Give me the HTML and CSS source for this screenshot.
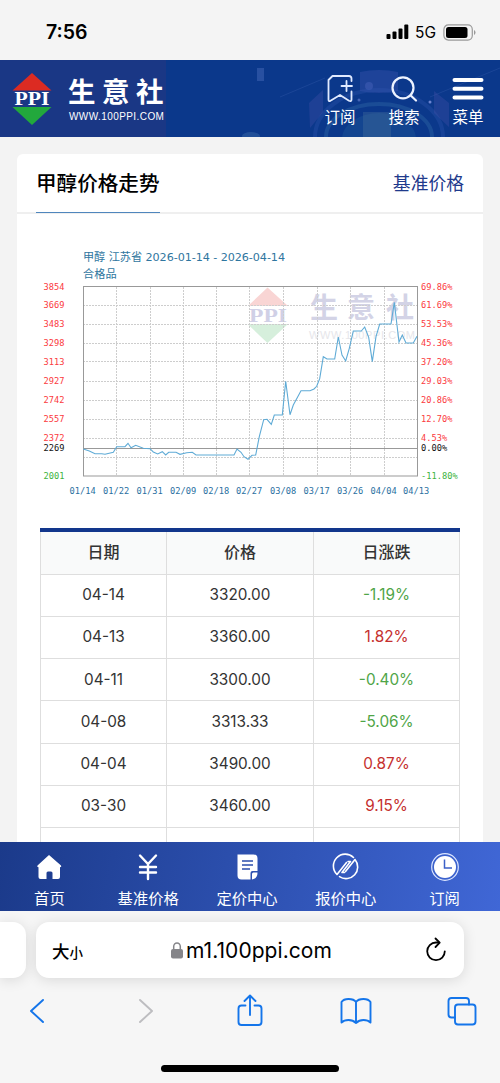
FILE: index.html
```html
<!DOCTYPE html>
<html lang="zh-CN">
<head>
    <meta charset="UTF-8">
    <meta name="viewport" content="width=device-width, initial-scale=1.0">
    <title>甲醇价格走势 - 生意社</title>
    <link rel="stylesheet" href="styles.css">
</head>
<body>
    <div class="status">
        <span class="time">7:56</span>
        <div class="signal">
            <svg width="23" height="16" viewBox="0 0 23 16">
                <rect x="0.5" y="10" width="4" height="5" rx="1"/>
                <rect x="6.5" y="7.5" width="4" height="7.5" rx="1"/>
                <rect x="12.5" y="4.5" width="4" height="10.5" rx="1"/>
                <rect x="18.3" y="0.5" width="4" height="14.5" rx="1"/>
            </svg>
            <span class="net">5G</span>
            <svg width="33" height="17" viewBox="0 0 33 17">
                <rect x="0.9" y="0.9" width="28.4" height="15.2" rx="4.5" fill="none" stroke="#999" stroke-width="1.2"/>
                <rect x="3" y="3" width="21.5" height="11" rx="2.5"/>
                <path d="M31 6v5q1.5-.6 1.500-2.500T31 6z" fill="#999"/>
            </svg>
        </div>
    </div>

    <header class="header">
        <div class="brand">
            <svg class="logo" width="40" height="54" viewBox="0 0 40 54">
                <path d="M20 1L39.500 18.500H0.500z" fill="#dc2b22"/>
                <path d="M0.500 35H39.500L20 53z" fill="#22a83c"/>
                <text x="2.500" y="32.500" textLength="35" lengthAdjust="spacingAndGlyphs">PPI</text>
            </svg>
            <div class="brand-text">
                <div class="brand-name">生意社</div>
                <div class="brand-url">WWW.100PPI.COM</div>
            </div>
        </div>
        <svg class="header-art" width="334" height="77" viewBox="166 60 334 77">
            <rect x="257" y="68" width="7" height="13" fill="#4568b8" opacity=".5"/>
            <path d="M280 97L325 78M430 97L500 68" stroke="#3158a8" stroke-width=".7" opacity=".6"/>
            <path d="M360 72q19-4 38 0v19q-19 4-38 0z" fill="#3d55b0" opacity=".4"/>
            <circle cx="369" cy="86" r="4" fill="#5068c0" opacity=".4"/>
            <ellipse cx="379" cy="137" rx="64" ry="47" fill="none" stroke="#3459b4" stroke-width="4" opacity=".3"/>
            <ellipse cx="379" cy="137" rx="53" ry="33" fill="none" stroke="#3f7cae" stroke-width="4" opacity=".3"/>
            <ellipse cx="379" cy="139" rx="37" ry="26" fill="#2d6aa0" opacity=".25"/>
            <path d="M309 103l14-13v22l-13 16zM434 91l15 12v24l-15-14z" fill="#4d52ad" opacity=".3"/>
            <path d="M363 112h28v25h-28z" fill="#5479a0" opacity=".3"/>
            <circle cx="430" cy="102" r="1.500" fill="#6c84d0"/>
            <circle cx="359" cy="100" r="1.500" fill="#6c84d0" opacity=".6"/>
            <ellipse cx="251" cy="136" rx="9" ry="4" fill="#4474ad" opacity=".4"/>
        </svg>
        <div class="tools">
            <a class="tool">
                <svg width="28" height="30" viewBox="0 0 28 30" fill="none" stroke="#e0eaff" stroke-width="1.800" stroke-linejoin="round" stroke-linecap="round">
                    <path d="M25.500 7V4.500q0-2.500-2.500-2.500H6.500L2.500 6V25.500q0 2.500 2 1.300L14 21l9 5.800q2.500 1.200 2.500-1.300V17.500"/>
                    <path d="M20.500 7v10M15.500 12H26"/>
                </svg>
                <span>订阅</span>
            </a>
            <a class="tool">
                <svg width="28" height="30" viewBox="0 0 28 30" fill="none" stroke="#edf3ff" stroke-width="2.200" stroke-linecap="round">
                    <circle cx="13" cy="13.800" r="10.500"/>
                    <path d="M20.500 21.300l5.500 5.200"/>
                </svg>
                <span>搜索</span>
            </a>
            <a class="tool">
                <svg width="32" height="30" viewBox="0 0 32 30" stroke="#fff" stroke-width="4" stroke-linecap="round">
                    <path d="M2.500 6h27M2.500 14.700h27M2.500 23.400h27"/>
                </svg>
                <span>菜单</span>
            </a>
        </div>
    </header>

    <main class="content">
        <section class="card">
            <div class="card-head">
                <h2>甲醇价格走势</h2>
                <a class="more">基准价格</a>
            </div>
            <svg class="chart" width="466" height="314" viewBox="17 214 466 314">
                <g class="watermark">
                    <path d="M267.500 287.500L288 306h-40z" fill="#f9d5d4"/>
                    <path d="M247.500 324H288l-20.500 19z" fill="#d6efdc"/>
                    <text class="wm-ppi" x="249" y="321.500" textLength="38" lengthAdjust="spacingAndGlyphs">PPI</text>
                    <text class="wm-name" x="310 347 386" y="317.500">生意社</text>
                    <text class="wm-url" x="309" y="339" textLength="106">WWW.100PPI.COM</text>
                </g>
                <path class="grid" d="M116.500 287v189M150.500 287v189M183.500 287v189M216.500 287v189M249.500 287v189M283.500 287v189M317.500 287v189M350.500 287v189M384.500 287v189"/>
                <path class="grid" d="M83 305.500h334M83 324.500h334M83 343.500h334M83 361.500h334M83 381.500h334M83 400.500h334M83 419.500h334M83 438.500h334M83 457.500h334"/>
                <rect class="frame" x="83.500" y="286.500" width="334" height="189.500"/>
                <path class="frame" d="M83 448.500h334"/>
                <polyline class="price" points="83.300,449 89.300,451 95,453.700 101.700,453.700 105,454.300 113.300,452.300 116.700,446.700 125,446.700 128,443.300 131,447.700 135.700,445.300 143.300,448.300 150,448.700 153.300,452 157.700,454 162.300,451.700 165.700,455 168.700,452.300 176,452.300 180,454.300 186.700,452.700 192.300,452.300 196,455 234,455 237,449 241,452.300 244,456.700 248,459.300 252,455.300 255.700,455 259.300,436.700 263.700,419.700 267,419.300 271.300,424.300 274.300,415 282.300,415 285.700,381.300 290,414.700 293.300,405 301,390.700 310,390.700 314,389 316.700,386.300 319.700,378.700 323.300,356.700 327,359 334.700,359 338.300,337 342,355 345.700,361 349.300,348.300 353.300,331 361.300,331 364.700,327 368.700,337.300 372.300,361.700 376,336.700 379.700,324 391,324 394.300,302.300 399,342 402.300,335 406,343 413.300,343 417,336.300"/>
                <g class="caption">
                    <text x="83" y="261" textLength="202">甲醇 江苏省 2026-01-14 - 2026-04-14</text>
                    <text x="83" y="278">合格品</text>
                </g>
                <g class="axis up">
                    <text x="43.500" y="289.500">3854</text>
                    <text x="43.500" y="308">3669</text>
                    <text x="43.500" y="327">3483</text>
                    <text x="43.500" y="346">3298</text>
                    <text x="43.500" y="364.500">3113</text>
                    <text x="43.500" y="384">2927</text>
                    <text x="43.500" y="403">2742</text>
                    <text x="43.500" y="422">2557</text>
                    <text x="43.500" y="440.500">2372</text>
                    <text x="421" y="289.500">69.86%</text>
                    <text x="421" y="308">61.69%</text>
                    <text x="421" y="327">53.53%</text>
                    <text x="421" y="346">45.36%</text>
                    <text x="421" y="364.500">37.20%</text>
                    <text x="421" y="384">29.03%</text>
                    <text x="421" y="403">20.86%</text>
                    <text x="421" y="422">12.70%</text>
                    <text x="421" y="440.500">4.53%</text>
                </g>
                <g class="axis zero">
                    <text x="43.500" y="451">2269</text>
                    <text x="421" y="451">0.00%</text>
                </g>
                <g class="axis down">
                    <text x="43.500" y="478.500">2001</text>
                    <text x="421" y="478.500">-11.80%</text>
                </g>
                <g class="axis dates">
                    <text x="69.500" y="493.500">01/14</text>
                    <text x="103" y="493.500">01/22</text>
                    <text x="136.500" y="493.500">01/31</text>
                    <text x="170" y="493.500">02/09</text>
                    <text x="203" y="493.500">02/18</text>
                    <text x="236" y="493.500">02/27</text>
                    <text x="270" y="493.500">03/08</text>
                    <text x="303.500" y="493.500">03/17</text>
                    <text x="337" y="493.500">03/26</text>
                    <text x="370.500" y="493.500">04/04</text>
                    <text x="403" y="493.500">04/13</text>
                </g>
            </svg>
            <table class="prices">
                <thead>
                    <tr><th class="c1">日期</th><th class="c2">价格</th><th>日涨跌</th></tr>
                </thead>
                <tbody>
                    <tr><td>04-14</td><td>3320.00</td><td class="green">-1.19%</td></tr>
                    <tr><td>04-13</td><td>3360.00</td><td class="red">1.82%</td></tr>
                    <tr><td>04-11</td><td>3300.00</td><td class="green">-0.40%</td></tr>
                    <tr><td>04-08</td><td>3313.33</td><td class="green">-5.06%</td></tr>
                    <tr><td>04-04</td><td>3490.00</td><td class="red">0.87%</td></tr>
                    <tr><td>03-30</td><td>3460.00</td><td class="red">9.15%</td></tr>
                    <tr><td></td><td></td><td></td></tr>
                </tbody>
            </table>
        </section>
    </main>

    <nav class="nav">
        <a>
            <svg width="30" height="30" viewBox="0 0 30 30">
                <path d="M15 3L27 13.500q1 1.500-1 1.800V25q0 2-2 2h-5.500v-6q0-1.500-1.500-1.500h-3q-1.500 0-1.500 1.500v6H6.500q-2 0-2-2v-9.700q-2-.3-1-1.800z" fill="#fff"/>
            </svg>
            <span>首页</span>
        </a>
        <a>
            <svg width="30" height="30" viewBox="0 0 30 30" fill="none" stroke="#fff" stroke-width="2.400" stroke-linecap="round">
                <path d="M7 3.500l8 8.500 8-8.500M7 15h16M7 20.500h16M15 12v15"/>
            </svg>
            <span>基准价格</span>
        </a>
        <a>
            <svg width="30" height="30" viewBox="0 0 30 30">
                <path d="M5.500 2.500H21.500q4 0 4 4v12.500h-5q-2 0-2 2v6.500H9.500q-4 0-4-4z" fill="#fff"/>
                <path d="M25.500 20.500q0 6-5.500 7v-5.500q0-1.500 1.500-1.500z" fill="#fff"/>
                <path d="M10 9h11M10 13h11M10 17h8" stroke="#2c4fac" stroke-width="1.400"/>
            </svg>
            <span>定价中心</span>
        </a>
        <a>
            <svg width="30" height="30" viewBox="0 0 30 30" fill="none" stroke="#fff" stroke-width="1.600" stroke-linecap="round" stroke-linejoin="round">
                <path d="M15.500 10.500L6 22.500A11.700 11.700 0 0 1 22.500 5.500"/>
                <path d="M14.500 19.500L24 7.500A11.700 11.700 0 0 1 8.500 24.700"/>
                <path d="M17 9.500h2.500L11 20.500h2.500"/>
            </svg>
            <span>报价中心</span>
        </a>
        <a>
            <svg width="30" height="30" viewBox="0 0 30 30" fill="none">
                <circle cx="15" cy="15" r="13.300" stroke="#dce6ff" stroke-width="1.200"/>
                <circle cx="15" cy="15" r="11" fill="#fff"/>
                <path d="M14.500 7.500V16H22" stroke="#3b60c8" stroke-width="1.500"/>
            </svg>
            <span>订阅</span>
        </a>
    </nav>

    <footer class="browser">
        <div class="tabs">
            <div class="prev-tab"></div>
            <div class="address">
                <span class="size">大<small>小</small></span>
                <span class="url">
                    <svg width="12" height="17" viewBox="0 0 12 17">
                        <rect x="0" y="7" width="12" height="9.500" rx="2" fill="#858589"/>
                        <path d="M2.700 7.500V4.500a3.300 3.600 0 0 1 6.600 0v3" fill="none" stroke="#858589" stroke-width="1.500"/>
                    </svg>
                    m1.100ppi.com
                </span>
                <svg class="reload" width="22" height="26" viewBox="0 0 22 26" fill="none" stroke="#000" stroke-width="1.800" stroke-linecap="round" stroke-linejoin="round">
                    <path d="M13.500 5.500H11A8.800 8.800 0 1 0 19.800 14.300"/>
                    <path d="M10.500 1.500l4.200 4.200L10.500 10"/>
                </svg>
            </div>
        </div>
        <div class="toolbar">
            <svg width="16" height="26" viewBox="0 0 16 26"><path d="M14 2L2 13l12 11"/></svg>
            <svg class="off" width="16" height="26" viewBox="0 0 16 26"><path d="M2 2l12 11L2 24"/></svg>
            <svg width="28" height="34" viewBox="0 0 28 34">
                <path d="M9.500 11.500H5.500q-3 0-3 3V28q0 3 3 3h17q3 0 3-3V14.500q0-3-3-3h-4M14 21V2M8.500 7L14 1.500 19.500 7"/>
            </svg>
            <svg width="32" height="28" viewBox="0 0 32 28">
                <path d="M16 5Q14 2 8.500 2 3.500 2 1.500 5V25.500Q4 23 8.500 23T16 26Q19 23 23.500 23T30.500 25.500V5Q28.500 2 23.500 2 18 2 16 5zM16 5v21"/>
            </svg>
            <svg width="30" height="30" viewBox="0 0 30 30">
                <rect x="8" y="8.500" width="20.500" height="20" rx="3"/>
                <path d="M8 21.500H4.500q-3 0-3-3V5q0-3 3-3H19q3 0 3 3v3.500"/>
            </svg>
        </div>
        <div class="home-bar"></div>
    </footer>
</body>
</html>
```
FILE: styles.css
```css
* {
    box-sizing: border-box;
}
body {
    margin: 0;
    width: 500px;
    height: 1083px;
    overflow: hidden;
    display: flex;
    flex-direction: column;
    font-family: Inter, "Noto Sans CJK SC", sans-serif;
    background: #f4f4f4;
    color: #333;
}
svg {
    display: block;
    flex: none;
}
.status {
    height: 60px;
    flex: none;
    display: flex;
    justify-content: space-between;
    align-items: center;
    padding: 4px 24px 0 46px;
    color: #000;
}
.time {
    font-size: 19.5px;
    font-weight: 600;
}
.signal {
    display: flex;
    align-items: center;
    gap: 6px;
}
.net {
    font-size: 15.5px;
    width: 22px;
}
.header {
    height: 77px;
    flex: none;
    display: flex;
    position: relative;
    background: #0b388b;
    color: #fff;
}
.brand {
    width: 166px;
    background: #1a3785;
    display: flex;
    padding: 12px 0 0 12px;
    gap: 16px;
}
.logo text {
    font: bold 18px "Liberation Serif", serif;
    fill: #fff;
}
.brand-name {
    margin-top: 1px;
    font-size: 27.5px;
    line-height: 38px;
    font-weight: 700;
    letter-spacing: 6.5px;
    white-space: nowrap;
}
.brand-url {
    padding-left: 1px;
    font: 10px/12px "Liberation Sans", sans-serif;
    letter-spacing: 0.42px;
}
.header-art {
    position: absolute;
    left: 166px;
    top: 0;
}
.tools {
    position: relative;
    margin-left: auto;
    padding: 14px 16px 0 0;
    display: flex;
    gap: 32px;
}
.tool {
    width: 32px;
    display: flex;
    flex-direction: column;
    align-items: center;
}
.tool span {
    font-size: 15.5px;
    line-height: 28px;
    white-space: nowrap;
}
.content {
    height: 705px;
    flex: none;
    overflow: hidden;
    padding: 17px 17px 0;
    background: #f3f3f3;
}
.card {
    background: #fff;
    border-radius: 6px;
    height: 720px;
}
.card-head {
    height: 60px;
    display: flex;
    justify-content: space-between;
    padding: 0 19px;
    border-bottom: 2px solid #efefef;
}
.card-head h2 {
    margin: 0;
    height: 59px;
    font-size: 20.6px;
    line-height: 59px;
    font-weight: 500;
    color: #000;
    border-bottom: 1.5px solid #4f86bd;
}
.more {
    font-size: 17.8px;
    line-height: 60px;
    color: #1f3a8c;
}
.chart text {
    white-space: pre;
}
.grid {
    fill: none;
    stroke: #cdcdcd;
    stroke-width: 1;
    stroke-dasharray: 2 1;
}
.frame {
    fill: none;
    stroke: #999;
    stroke-width: 1;
}
.price {
    fill: none;
    stroke: #5fabd6;
    stroke-width: 1.1;
}
.caption {
    font: 11.2px "DejaVu Sans", "Noto Sans CJK SC", sans-serif;
    fill: #2f76a0;
}
.axis {
    font: 8.7px "DejaVu Sans Mono", monospace;
}
.up {
    fill: #fb3a40;
}
.zero {
    fill: #111;
}
.down {
    fill: #3db33d;
}
.dates {
    fill: #2a6f9f;
}
.wm-ppi {
    font: bold 19px "Liberation Serif", serif;
    fill: #d0d0e6;
}
.wm-name {
    font-size: 28px;
    font-weight: 700;
    fill: #d3d3e6;
}
.wm-url {
    font: 11px "Liberation Sans", sans-serif;
    fill: #e6e6ea;
}
.prices {
    width: 420px;
    margin: 0 0 0 23px;
    table-layout: fixed;
    border-collapse: collapse;
    font-size: 15.3px;
    text-align: center;
}
.prices th, .prices td {
    height: 42.25px;
    padding: 0 0 1px;
    border: 1px solid #dedede;
}
.prices th {
    height: 44px;
    padding-bottom: 4px;
    font-size: 16px;
    font-weight: 500;
    background: #f9fafa;
    border-top: 4px solid #12368c;
}
.c1 {
    width: 126px;
}
.c2 {
    width: 147px;
}
.prices .green {
    color: #4fa548;
}
.prices .red {
    color: #c5302e;
}
.nav {
    height: 69px;
    flex: none;
    display: grid;
    grid-template-columns: repeat(5, 1fr);
    padding: 10px 6px 0 0;
    background: linear-gradient(100deg, #1b3a8a 0%, #2b4eac 45%, #4067d6 100%);
    color: #fff;
}
.nav a {
    display: flex;
    flex-direction: column;
    align-items: center;
    font-size: 15.3px;
    line-height: 34px;
}
.browser {
    height: 172px;
    flex: none;
    background: #f6f6f6;
    overflow: hidden;
}
.tabs {
    display: flex;
    gap: 10px;
    padding-top: 11px;
}
.prev-tab, .address {
    height: 56px;
    background: #fff;
    box-shadow: 0 2px 14px rgba(0, 0, 0, 0.12);
}
.prev-tab {
    width: 26px;
    border-radius: 0 13px 13px 0;
}
.address {
    width: 428px;
    border-radius: 13px;
    display: flex;
    align-items: center;
    padding: 0 17px 0 16px;
    color: #000;
}
.size {
    font-size: 17.5px;
    font-weight: 500;
    width: 119px;
}
.size small {
    font-size: 13.5px;
}
.url {
    display: flex;
    align-items: center;
    gap: 3px;
    font-size: 21px;
    letter-spacing: 0.05px;
}
.reload {
    margin-left: auto;
}
.toolbar {
    height: 65px;
    display: grid;
    grid-template-columns: 74px 143px 66px 145px 67px;
    place-items: center;
    fill: none;
    stroke: #1475ea;
    stroke-width: 1.9;
    stroke-linecap: round;
    stroke-linejoin: round;
}
.off {
    stroke: #bdbdc0;
}
.home-bar {
    width: 178px;
    height: 7px;
    margin: 22px auto 0;
    border-radius: 4px;
    background: #000;
}
```
